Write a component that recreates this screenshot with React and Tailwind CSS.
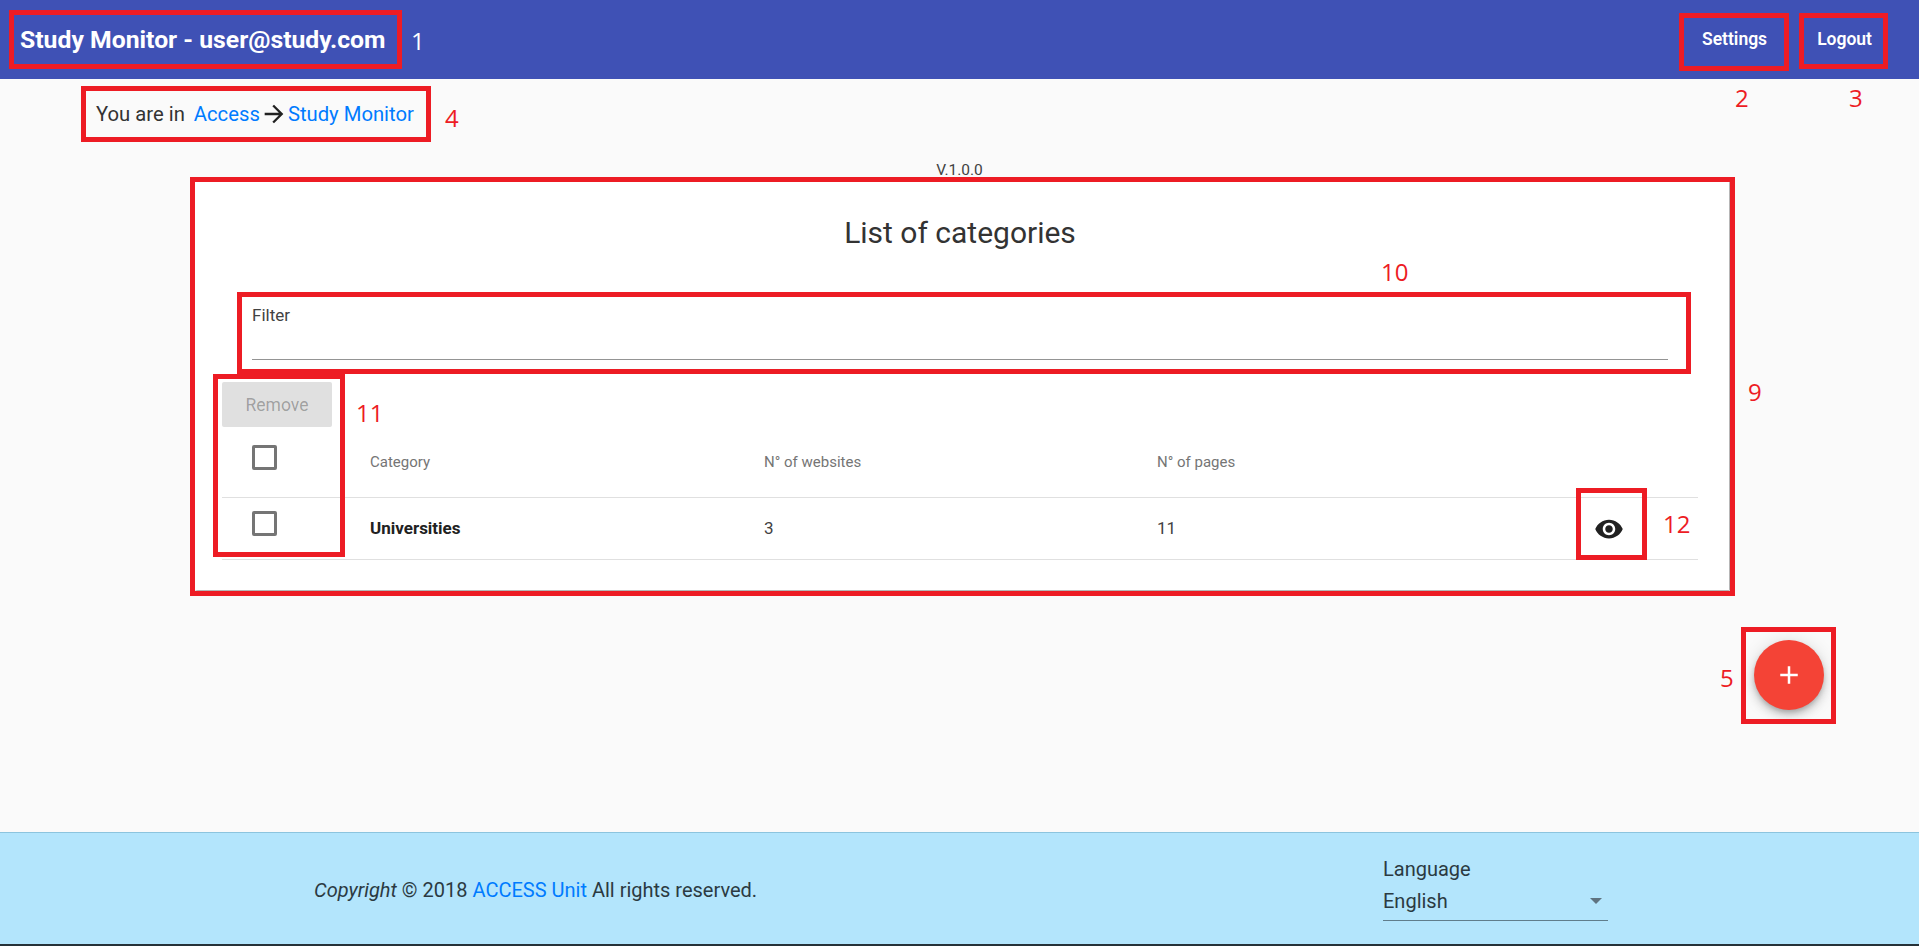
import { MdArrowForward, MdVisibility, MdAdd } from "react-icons/md";

// red marks drawn over the screenshot
const boxes = [
  { id: 1, cls: "left-[9px] top-[10px] w-[393px] h-[59px]" },
  { id: 2, cls: "left-[1679px] top-[13px] w-[110px] h-[58px]" },
  { id: 3, cls: "left-[1799px] top-[13px] w-[89px] h-[56px]" },
  { id: 4, cls: "left-[81px] top-[86px] w-[350px] h-[56px]" },
  { id: 9, cls: "left-[190px] top-[177px] w-[1545px] h-[419px]" },
  { id: 10, cls: "left-[237px] top-[292px] w-[1454px] h-[82px]" },
  { id: 11, cls: "left-[213px] top-[374px] w-[132px] h-[183px]" },
  { id: 12, cls: "left-[1576px] top-[488px] w-[71px] h-[72px]" },
  { id: 5, cls: "left-[1741px] top-[627px] w-[95px] h-[97px]" },
];

const labels = [
  { text: "1", cls: "left-[411px] top-[24px] text-white" },
  { text: "2", cls: "left-[1735px] top-[81px] text-[#ed1c24]" },
  { text: "3", cls: "left-[1849px] top-[81px] text-[#ed1c24]" },
  { text: "4", cls: "left-[445px] top-[101px] text-[#ed1c24]" },
  { text: "9", cls: "left-[1748px] top-[375px] text-[#ed1c24]" },
  { text: "10", cls: "left-[1381px] top-[255px] text-[#ed1c24]" },
  { text: "11", cls: "left-[356px] top-[396px] text-[#ed1c24]" },
  { text: "12", cls: "left-[1663px] top-[507px] text-[#ed1c24]" },
  { text: "5", cls: "left-[1720px] top-[661px] text-[#ed1c24]" },
];

function Checkbox() {
  return <div className="w-[25px] h-[25px] border-[3px] border-[#757575] rounded-[2px]" />;
}

function App() {
  return (
    <div className="relative h-[946px] overflow-hidden flex flex-col bg-[#fafafa] font-['Roboto',sans-serif] text-[#212121]">
      <header className="h-[79px] shrink-0 bg-[#3f51b5] text-white flex items-center pl-[20px] pr-[47px]">
        <span className="text-[24.75px] font-bold whitespace-nowrap">Study Monitor - user@study.com</span>
        <div className="ml-auto flex items-center gap-[50px] text-[17.5px] font-semibold">
          <span>Settings</span>
          <span>Logout</span>
        </div>
      </header>

      <main className="flex-1 flex flex-col">
        <div className="pl-[96px] h-[28px] mt-[21px] flex items-center text-[20.25px] text-[#333] whitespace-nowrap">
          <span>You are in</span>
          <span className="ml-[9px] text-[#007bff]">Access</span>
          <MdArrowForward size={28} className="text-[#212121]" />
          <span className="text-[#007bff]">Study Monitor</span>
        </div>

        <div className="mt-[34px] text-center text-[15.5px] leading-[16px] text-[#424242]">V.1.0.0</div>

        <section className="mt-[2px] ml-[195px] w-[1534px] h-[410px] bg-white shadow-[1px_1px_2px_rgba(0,0,0,0.4)] pt-[33px] pl-[27px] pr-[31px]">
          <h1 className="text-center text-[30px] leading-[40px] font-normal text-[#333]">List of categories</h1>

          <div className="mt-[43px] ml-[30px] mr-[30px] h-[64px] border-b border-[#949494]">
            <div className="text-[17px] leading-[19px] pt-[10px] text-[#424242]">Filter</div>
          </div>

          <button className="block mt-[22px] w-[110px] h-[45px] pt-[1px] bg-[#e0e0e0] text-[rgba(0,0,0,0.3)] text-[17.5px] rounded-[2px]">
            Remove
          </button>

          <div className="grid grid-cols-[148px_394px_393px_1fr] items-center h-[71px] border-b border-[#e0e0e0] text-[15px] text-[#757575]">
            <div className="pl-[30px] -mt-[10px]"><Checkbox /></div>
            <div>Category</div>
            <div>N° of websites</div>
            <div>N° of pages</div>
          </div>

          <div className="grid grid-cols-[148px_394px_393px_1fr] items-center h-[62px] border-b border-[#e0e0e0] text-[17px]">
            <div className="pl-[30px] -mt-[11px]"><Checkbox /></div>
            <div className="font-bold text-[17px] text-[#212121]">Universities</div>
            <div className="text-[#424242]">3</div>
            <div className="flex items-center justify-between pr-[74px] text-[#424242]">
              <span>11</span>
              <MdVisibility size={30} className="text-[#212121]" />
            </div>
          </div>
        </section>

        <div className="mt-[50px] ml-[1754px] w-[70px] h-[70px] rounded-full bg-[#f44336] text-white flex items-center justify-center shadow-[0_3px_5px_-1px_rgba(0,0,0,0.2),0_6px_10px_0_rgba(0,0,0,0.14),0_1px_18px_0_rgba(0,0,0,0.12)]">
          <MdAdd size={30} />
        </div>
      </main>

      <footer className="h-[114px] shrink-0 bg-[#b3e5fc] border-t border-[#8cc4de] border-b-2 border-b-[#263238] flex text-[20px] text-[#2b3a42]">
        <div className="ml-[314px] mt-[42px] whitespace-nowrap">
          <em>Copyright</em> © 2018 <span className="text-[#007bff]">ACCESS Unit</span> All rights reserved.
        </div>
        <div className="ml-auto mr-[311px] mt-[24px] w-[225px] h-[64px] border-b border-[#607d8b]">
          <div className="leading-[24px]">Language</div>
          <div className="leading-[24px] mt-[8px] flex items-center justify-between pr-[6px]">
            <span>English</span>
            <span className="w-0 h-0 border-x-[6px] border-x-transparent border-t-[6px] border-t-[#5f7380]" />
          </div>
        </div>
      </footer>

      {/* annotations */}
      {boxes.map((b) => (
        <div key={b.id} className={`absolute border-[5px] border-[#ed1c24] pointer-events-none ${b.cls}`} />
      ))}
      {labels.map((l) => (
        <span key={l.text} className={`absolute text-[24px] leading-[34px] font-['Open_Sans',sans-serif] ${l.cls}`}>
          {l.text}
        </span>
      ))}
    </div>
  );
}

export default App;
